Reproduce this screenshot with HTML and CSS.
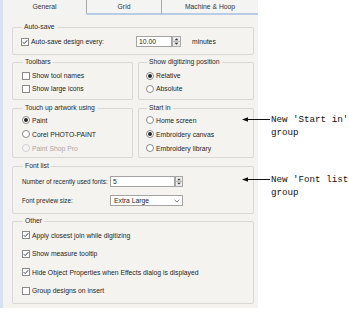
FILE: index.html
```html
<!DOCTYPE html>
<html>
<head>
<meta charset="utf-8">
<title>Options - General</title>
<link rel="stylesheet" href="styles.css">
</head>
<body>
<div class="stage">
  <div class="dialog">
    <div class="tabs">
      <div class="tab active">General</div>
      <div class="tab t-grid">Grid</div>
      <div class="tab t-mach">Machine &amp; Hoop</div>
    </div>
    <div class="page">
      <fieldset class="grp g-auto">
        <legend>Auto-save</legend>
        <div class="row">
          <span class="opt w-auto">
            <svg class="ico" viewBox="0 0 8 8"><rect x=".5" y=".5" width="7" height="7" fill="#fff" stroke="#8a8a8a"/><path d="M1.7 4.1 L3.2 5.6 L6.3 2.2" fill="none" stroke="#3b4a58"/></svg>
            <span>Auto-save design every:</span>
          </span>
          <span class="spin">
            <span class="field f-auto">10.00</span>
            <svg class="spinbtn sb-auto" viewBox="0 0 9 11"><rect x=".5" y=".5" width="8" height="10" fill="#ebebeb" stroke="#a8a8a8"/><line x1="1" y1="5.5" x2="8" y2="5.5" stroke="#bdbdbd"/><path d="M2.6 4.2 L4.5 2.3 L6.4 4.2Z" fill="#333"/><path d="M2.6 6.8 L4.5 8.7 L6.4 6.8Z" fill="#333"/></svg>
          </span>
          <span class="unit">minutes</span>
        </div>
      </fieldset>

      <div class="cols c-top">
        <fieldset class="grp g-tool">
          <legend>Toolbars</legend>
          <div class="opt r13">
            <svg class="ico" viewBox="0 0 8 8"><rect x=".5" y=".5" width="7" height="7" fill="#fff" stroke="#8a8a8a"/></svg>
            <span>Show tool names</span>
          </div>
          <div class="opt r13">
            <svg class="ico" viewBox="0 0 8 8"><rect x=".5" y=".5" width="7" height="7" fill="#fff" stroke="#8a8a8a"/></svg>
            <span>Show large icons</span>
          </div>
        </fieldset>
        <fieldset class="grp g-tool right">
          <legend>Show digitizing position</legend>
          <div class="opt r13">
            <svg class="ico" viewBox="0 0 8 8"><circle cx="4" cy="4" r="3.5" fill="#fff" stroke="#8a8a8a"/><circle cx="4" cy="4" r="2" fill="#262626"/></svg>
            <span>Relative</span>
          </div>
          <div class="opt r13">
            <svg class="ico" viewBox="0 0 8 8"><circle cx="4" cy="4" r="3.5" fill="#fff" stroke="#8a8a8a"/></svg>
            <span>Absolute</span>
          </div>
        </fieldset>
      </div>

      <div class="cols c-mid">
        <fieldset class="grp g-touch">
          <legend>Touch up artwork using</legend>
          <div class="opt r14">
            <svg class="ico" viewBox="0 0 8 8"><circle cx="4" cy="4" r="3.5" fill="#fff" stroke="#8a8a8a"/><circle cx="4" cy="4" r="2" fill="#262626"/></svg>
            <span>Paint</span>
          </div>
          <div class="opt r14">
            <svg class="ico" viewBox="0 0 8 8"><circle cx="4" cy="4" r="3.5" fill="#fff" stroke="#8a8a8a"/></svg>
            <span>Corel PHOTO-PAINT</span>
          </div>
          <div class="opt r14 disabled">
            <svg class="ico" viewBox="0 0 8 8"><circle cx="4" cy="4" r="3.5" fill="#f6f6f6" stroke="#cfcfcf"/></svg>
            <span>Paint Shop Pro</span>
          </div>
        </fieldset>
        <fieldset class="grp g-touch right">
          <legend>Start in</legend>
          <div class="opt r14">
            <svg class="ico" viewBox="0 0 8 8"><circle cx="4" cy="4" r="3.5" fill="#fff" stroke="#8a8a8a"/></svg>
            <span>Home screen</span>
          </div>
          <div class="opt r14">
            <svg class="ico" viewBox="0 0 8 8"><circle cx="4" cy="4" r="3.5" fill="#fff" stroke="#8a8a8a"/><circle cx="4" cy="4" r="2" fill="#262626"/></svg>
            <span>Embroidery canvas</span>
          </div>
          <div class="opt r14">
            <svg class="ico" viewBox="0 0 8 8"><circle cx="4" cy="4" r="3.5" fill="#fff" stroke="#8a8a8a"/></svg>
            <span>Embroidery library</span>
          </div>
        </fieldset>
      </div>

      <fieldset class="grp g-font">
        <legend>Font list</legend>
        <div class="row">
          <span class="flabel">Number of recently used fonts:</span>
          <span class="spin">
            <span class="field f-font">5</span>
            <svg class="spinbtn sb-font" viewBox="0 0 8 11"><rect x=".5" y=".5" width="7" height="10" fill="#ebebeb" stroke="#a8a8a8"/><line x1="1" y1="5.5" x2="7" y2="5.5" stroke="#bdbdbd"/><path d="M2.2 4.2 L4 2.4 L5.8 4.2Z" fill="#333"/><path d="M2.2 6.8 L4 8.6 L5.8 6.8Z" fill="#333"/></svg>
          </span>
        </div>
        <div class="row r-gap">
          <span class="flabel">Font preview size:</span>
          <span class="select">
            <span>Extra Large</span>
            <svg class="chev" viewBox="0 0 6 4"><path d="M.6 .8 L3 3.1 L5.4 .8" fill="none" stroke="#6b6b6b" stroke-width=".9"/></svg>
          </span>
        </div>
      </fieldset>

      <fieldset class="grp g-other">
        <legend>Other</legend>
        <div class="opt r12">
          <svg class="ico" viewBox="0 0 8 8"><rect x=".5" y=".5" width="7" height="7" fill="#fff" stroke="#8a8a8a"/><path d="M1.7 4.1 L3.2 5.6 L6.3 2.2" fill="none" stroke="#3b4a58"/></svg>
          <span>Apply closest join while digitizing</span>
        </div>
        <div class="opt r12">
          <svg class="ico" viewBox="0 0 8 8"><rect x=".5" y=".5" width="7" height="7" fill="#fff" stroke="#8a8a8a"/><path d="M1.7 4.1 L3.2 5.6 L6.3 2.2" fill="none" stroke="#3b4a58"/></svg>
          <span>Show measure tooltip</span>
        </div>
        <div class="opt r12">
          <svg class="ico" viewBox="0 0 8 8"><rect x=".5" y=".5" width="7" height="7" fill="#fff" stroke="#8a8a8a"/><path d="M1.7 4.1 L3.2 5.6 L6.3 2.2" fill="none" stroke="#3b4a58"/></svg>
          <span>Hide Object Properties when Effects dialog is displayed</span>
        </div>
        <div class="opt r12">
          <svg class="ico" viewBox="0 0 8 8"><rect x=".5" y=".5" width="7" height="7" fill="#fff" stroke="#8a8a8a"/></svg>
          <span>Group designs on insert</span>
        </div>
      </fieldset>
    </div>
  </div>

  <div class="note n-start">
    <svg class="arrow" viewBox="0 0 28 13"><line x1="4" y1="6.5" x2="28" y2="6.5" stroke="#111" stroke-width="1"/><path d="M0 6.5 L6 4.3 L6 8.7Z" fill="#111"/></svg>
    <div class="ntext">New 'Start in'<br>group</div>
  </div>
  <div class="note n-font">
    <svg class="arrow" viewBox="0 0 28 13"><line x1="4" y1="6.5" x2="28" y2="6.5" stroke="#111" stroke-width="1"/><path d="M0 6.5 L6 4.3 L6 8.7Z" fill="#111"/></svg>
    <div class="ntext">New 'Font list'<br>group</div>
  </div>
</div>
</body>
</html>
```

FILE: styles.css
```css
* { box-sizing: border-box; }
html, body {
  margin: 0;
  padding: 0;
  background: #ffffff;
  overflow: hidden;
}
body {
  width: 349px;
  height: 319px;
  font-family: "Liberation Sans", Arial, sans-serif;
  font-size: 6.8px;
  color: #1f1f1f;
}
.stage {
  position: relative;
  width: 349px;
  height: 319px;
}
.dialog {
  width: 258px;
  height: 308px;
  background: #f4f3ef;
  border-left: 3px solid #d7e2ee;
  display: flex;
  flex-direction: column;
}
.tabs {
  display: flex;
  height: 15px;
  flex: none;
}
.tab {
  display: flex;
  align-items: center;
  justify-content: center;
  height: 15px;
  background: #f4f4f2;
  border-bottom: 2px solid #b9cce3;
  color: #333;
}
.tab.active {
  width: 84px;
  border-bottom-color: transparent;
  border-right: 1px solid #a9a9a9;
  background: #f3f3f1;
}
.t-grid {
  width: 75px;
  border-right: 1px solid #a9a9a9;
}
.t-mach {
  flex: 1;
}
.page {
  flex: 1;
  display: flex;
  flex-direction: column;
  padding: 8px 4px 4px 9px;
}
.grp {
  margin: 0;
  min-width: 0;
  border: 1px solid #dad8d3;
  border-radius: 2px;
  padding: 0 4px 0 9px;
}
.grp legend {
  padding: 0 2px;
  margin-left: 1px;
  line-height: 8px;
  height: 8px;
  color: #2a2a2a;
}
.g-auto {
  padding: 5px 4px 7px 8px;
}
.row {
  display: flex;
  align-items: center;
  height: 11px;
}
.r-gap {
  margin-top: 8px;
}
.opt {
  display: flex;
  align-items: center;
  gap: 2px;
  white-space: nowrap;
}
.ico {
  width: 8px;
  height: 8px;
  flex: none;
}
.w-auto {
  width: 115px;
}
.spin {
  display: flex;
  height: 11px;
}
.field {
  display: flex;
  align-items: center;
  height: 11px;
  background: #fff;
  border: 1px solid #a3a3a3;
  padding-left: 2px;
}
.f-auto { width: 36px; }
.f-font { width: 65px; }
.spinbtn { height: 11px; }
.sb-auto { width: 9px; }
.sb-font { width: 8px; }
.unit {
  margin-left: 11px;
}
.cols {
  display: grid;
  grid-template-columns: 121px 1fr;
  column-gap: 5px;
}
.c-top { margin-top: 3px; }
.c-mid { margin-top: 4px; }
.right {
  padding-left: 7px;
}
.g-tool {
  padding-top: 3px;
  padding-bottom: 4px;
}
.r13 { height: 13px; }
.g-touch {
  padding-top: 1px;
  padding-bottom: 2px;
}
.r14 { height: 14px; }
.disabled { color: #a9a9a9; }
.g-font {
  margin-top: 4px;
  padding: 6px 4px 7px 9px;
}
.flabel {
  width: 88px;
  flex: none;
  white-space: nowrap;
  font-size: 6.3px;
}
.select {
  display: flex;
  align-items: center;
  justify-content: space-between;
  width: 73px;
  height: 11px;
  background: #fff;
  border: 1px solid #a3a3a3;
  padding: 0 2px 0 3px;
}
.chev {
  width: 6px;
  height: 4px;
}
.g-other {
  margin-top: 3px;
  padding: 4px 4px 6.5px 9px;
  display: flex;
  flex-direction: column;
  gap: 6.5px;
}
.r12 { height: 12px; }
.note {
  position: absolute;
  left: 242px;
  display: flex;
  align-items: flex-start;
}
.n-start { top: 112.5px; }
.n-font { top: 173px; }
.arrow {
  width: 28px;
  height: 13px;
  flex: none;
}
.ntext {
  margin-left: 1px;
  font-family: "Liberation Mono", "Courier New", monospace;
  font-size: 9.2px;
  line-height: 13px;
  color: #111;
  white-space: nowrap;
}
```
